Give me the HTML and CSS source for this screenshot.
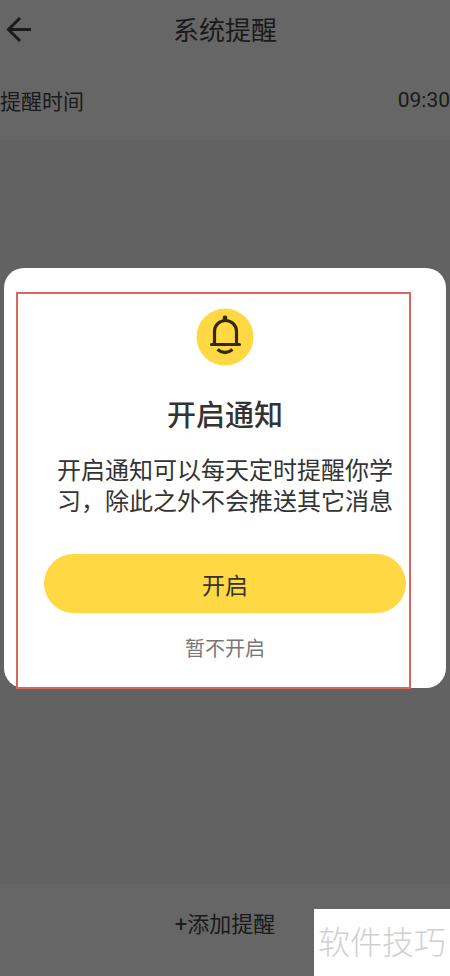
FILE: index.html
```html
<!DOCTYPE html>
<html lang="zh-CN">
<head>
<meta charset="utf-8">
<meta name="viewport" content="width=device-width, initial-scale=1">
<title>系统提醒</title>
<link rel="stylesheet" href="styles.css">
</head>
<body>
<div class="page">
  <header class="topbar">
    <button class="back" type="button" aria-label="返回">
      <svg width="26" height="26" viewBox="0 0 26 26" fill="none" stroke="currentColor" stroke-width="3" stroke-linejoin="miter"><path d="M14 1 2.500 12.500l11.500 11.500M2.500 12.500H25"/></svg>
    </button>
    <h1 class="title">系统提醒</h1>
  </header>
  <div class="row">
    <span>提醒时间</span>
    <time class="clock">09:30</time>
  </div>
  <main class="content"></main>
  <footer class="footer">
    <button class="add" type="button">+添加提醒</button>
  </footer>
</div>
<div class="overlay">
  <section class="dialog" role="dialog" aria-modal="true" aria-labelledby="dialog-title">
    <div class="outline"></div>
    <svg class="bell" width="58" height="58" viewBox="0 0 58 58" fill="none" stroke="#33290f" stroke-linecap="round">
      <circle cx="29" cy="29" r="28.500" fill="#ffd843" stroke="none"/>
      <circle cx="29" cy="10" r="2.400" fill="#33290f" stroke="none"/>
      <path stroke-width="3.200" d="M18.500 36V23.500a11 11 0 0 1 22 0V36M15.500 36.500h28"/>
      <path stroke-width="3.200" stroke-linecap="butt" d="M21.500 41.500q7.500 6 15 0"/>
    </svg>
    <h2 class="heading" id="dialog-title">开启通知</h2>
    <p class="message">开启通知可以每天定时提醒你学习，除此之外不会推送其它消息</p>
    <button class="primary" type="button">开启</button>
    <button class="secondary" type="button">暂不开启</button>
  </section>
</div>
<div class="watermark">软件技巧</div>
</body>
</html>
```
FILE: styles.css
```css
* {
  box-sizing: border-box;
}

body {
  margin: 0;
  color: #444;
  font-family: Roboto, "Noto Sans CJK SC", sans-serif;
}

button {
  padding: 0;
  border: 0;
  background: none;
  color: inherit;
  font: inherit;
  cursor: pointer;
}

.page {
  display: flex;
  flex-direction: column;
  min-height: 100vh;
  background: #f4f4f4;
}

.topbar {
  display: grid;
  grid-template-columns: 32px 1fr 32px;
  align-items: center;
  height: 60px;
  padding: 0 6px;
  background: #fff;
}

.back {
  display: flex;
}

.title {
  margin: 0;
  padding-top: 2px;
  font-size: 26px;
  font-weight: 400;
  line-height: 32px;
  text-align: center;
}

.row {
  display: flex;
  align-items: center;
  justify-content: space-between;
  height: 80px;
  background: #fff;
  font-size: 21px;
}

.content {
  flex: 1;
}

.footer {
  display: flex;
  align-items: center;
  justify-content: center;
  height: 92px;
  padding-bottom: 16px;
  background: #fff;
  font-size: 22px;
}

.overlay {
  position: fixed;
  inset: 0;
  display: flex;
  align-items: center;
  padding: 0 4px 20px;
  background: rgba(0, 0, 0, 0.6);
}

.dialog {
  position: relative;
  display: flex;
  flex: 1;
  flex-direction: column;
  align-items: center;
  padding: 40px 40px 23px;
  border-radius: 20px;
  background: #fff;
  color: #333;
}

.outline {
  position: absolute;
  inset: 24px 35px -1px 12px;
  border: 2px solid #d9655f;
  pointer-events: none;
}

.bell {
  display: block;
}

.heading {
  margin: 30px 0 20px;
  font-size: 29px;
  font-weight: 500;
  line-height: 40px;
}

.message {
  max-width: 336px;
  margin: 0 0 36px;
  font-size: 24px;
  line-height: 31px;
}

.primary {
  width: 100%;
  height: 59px;
  border-radius: 30px;
  background: #ffd843;
  font-size: 23px;
}

.secondary {
  margin-top: 20px;
  color: #777;
  font-size: 20px;
  line-height: 32px;
}

.watermark {
  position: fixed;
  right: 0;
  bottom: 0;
  padding: 10px 4px 8px;
  background: #fff;
  color: #d0d0d0;
  font-size: 32px;
  font-weight: 300;
  line-height: 49px;
}
```
